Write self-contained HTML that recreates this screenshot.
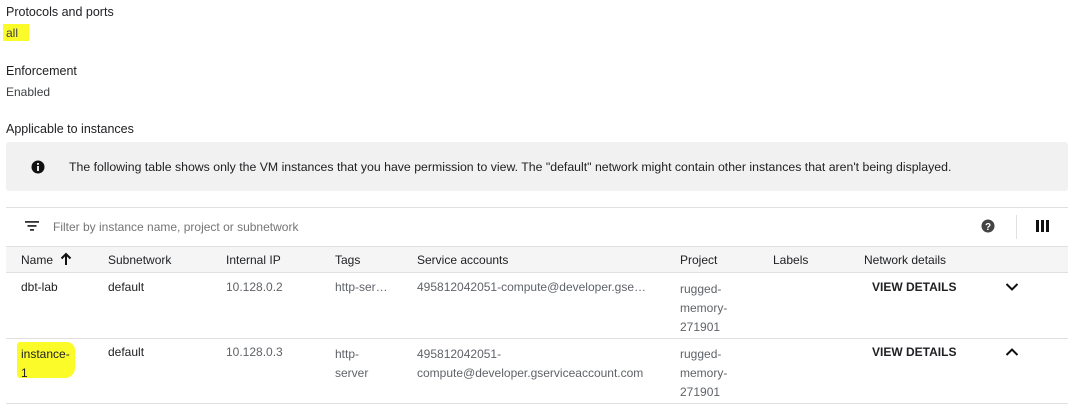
<!DOCTYPE html>
<html><head><style>
body{margin:0;width:1072px;height:409px;background:#fff;font-family:"Liberation Sans",sans-serif;position:relative;overflow:hidden;color:#212121}
.a{position:absolute;white-space:nowrap}
.h{font-size:12.5px;color:#202124}
.v{font-size:12px;color:#3c4043}
.g{font-size:12px;color:#5f6368}
.th{font-size:12px;color:#202124}
.hl{background:#fbfb2a}
</style></head><body>
<div class="a h" style="left:6px;top:5px">Protocols and ports</div>
<div class="a hl" style="left:3px;top:24px;width:26px;height:17px"></div>
<div class="a v" style="left:6px;top:26px">all</div>
<div class="a h" style="left:6px;top:64px">Enforcement</div>
<div class="a v" style="left:6px;top:85px">Enabled</div>
<div class="a h" style="left:6px;top:122px">Applicable to instances</div>
<div class="a" style="left:6px;top:142px;width:1062px;height:49px;background:#f1f1f1;border-radius:3px"></div>
<svg class="a" style="left:31px;top:160px" width="14" height="14"><circle cx="7" cy="7" r="6.5" fill="#111"/><rect x="6.1" y="6" width="1.8" height="5" fill="#fff"/><rect x="6.1" y="3" width="1.8" height="1.8" fill="#fff"/></svg>
<div class="a v" style="left:69px;top:160px;color:#202124;font-size:12.3px">The following table shows only the VM instances that you have permission to view. The "default" network might contain other instances that aren't being displayed.</div>
<div class="a" style="left:6px;top:207px;width:1062px;height:1px;background:#e0e0e0"></div>
<svg class="a" style="left:25px;top:221px" width="14" height="10"><rect x="0" y="0" width="14" height="1.8" fill="#333"/><rect x="2.5" y="4" width="9" height="1.8" fill="#333"/><rect x="5" y="8" width="4" height="1.8" fill="#333"/></svg>
<div class="a g" style="left:53px;top:220px;color:#757575">Filter by instance name, project or subnetwork</div>
<svg class="a" style="left:981px;top:219px" width="14" height="14"><circle cx="7" cy="7" r="6.5" fill="#444"/><text x="7" y="11" font-size="10" font-weight="bold" fill="#fff" text-anchor="middle" font-family="Liberation Sans">?</text></svg>
<div class="a" style="left:1016px;top:215px;width:1px;height:24px;background:#e0e0e0"></div>
<svg class="a" style="left:1036px;top:220px" width="13" height="12"><rect x="0" y="0" width="3" height="12" fill="#111"/><rect x="5" y="0" width="3" height="12" fill="#111"/><rect x="10" y="0" width="3" height="12" fill="#111"/></svg>
<div class="a" style="left:6px;top:246px;width:1062px;height:27px;background:#f5f5f5;border-top:1px solid #e0e0e0;border-bottom:1px solid #e0e0e0;box-sizing:border-box"></div>
<div class="a th" style="left:21px;top:253px">Name</div>
<svg class="a" style="left:60px;top:252px" width="12" height="14"><path d="M6 13V2M1.5 6.5L6 2l4.5 4.5" stroke="#111" stroke-width="2" fill="none"/></svg>
<div class="a th" style="left:108px;top:253px">Subnetwork</div>
<div class="a th" style="left:226px;top:253px">Internal IP</div>
<div class="a th" style="left:335px;top:253px">Tags</div>
<div class="a th" style="left:417px;top:253px">Service accounts</div>
<div class="a th" style="left:680px;top:253px">Project</div>
<div class="a th" style="left:773px;top:253px">Labels</div>
<div class="a th" style="left:864px;top:253px">Network details</div>
<div class="a v" style="left:21px;top:280px;color:#202124">dbt-lab</div>
<div class="a v" style="left:108px;top:280px;color:#202124">default</div>
<div class="a g" style="left:226px;top:280px">10.128.0.2</div>
<div class="a g" style="left:335px;top:280px">http-ser…</div>
<div class="a g" style="left:417px;top:280px">495812042051-compute@developer.gse…</div>
<div class="a g" style="left:680px;top:280px;line-height:19px;white-space:normal">rugged-<br>memory-<br>271901</div>
<div class="a th" style="left:872px;top:280px;font-weight:bold">VIEW DETAILS</div>
<svg class="a" style="left:1005px;top:282px" width="14" height="10"><path d="M1.5 2l5.5 5.5L12.5 2" stroke="#111" stroke-width="2" fill="none"/></svg>
<div class="a" style="left:6px;top:338px;width:1062px;height:1px;background:#e0e0e0"></div>
<div class="a hl" style="left:17px;top:342px;width:58px;height:36px;border-radius:3px 8px 10px 3px"></div>
<div class="a v" style="left:21px;top:345px;color:#202124;line-height:19px">instance-<br>1</div>
<div class="a v" style="left:108px;top:345px;color:#202124">default</div>
<div class="a g" style="left:226px;top:345px">10.128.0.3</div>
<div class="a g" style="left:335px;top:345px;line-height:19px">http-<br>server</div>
<div class="a g" style="left:417px;top:345px;line-height:19px">495812042051-<br>compute@developer.gserviceaccount.com</div>
<div class="a g" style="left:680px;top:345px;line-height:19px">rugged-<br>memory-<br>271901</div>
<div class="a th" style="left:872px;top:345px;font-weight:bold">VIEW DETAILS</div>
<svg class="a" style="left:1005px;top:347px" width="14" height="10"><path d="M1.5 8l5.5-5.5L12.5 8" stroke="#111" stroke-width="2" fill="none"/></svg>
<div class="a" style="left:6px;top:403px;width:1062px;height:1px;background:#e0e0e0"></div>
</body></html>
